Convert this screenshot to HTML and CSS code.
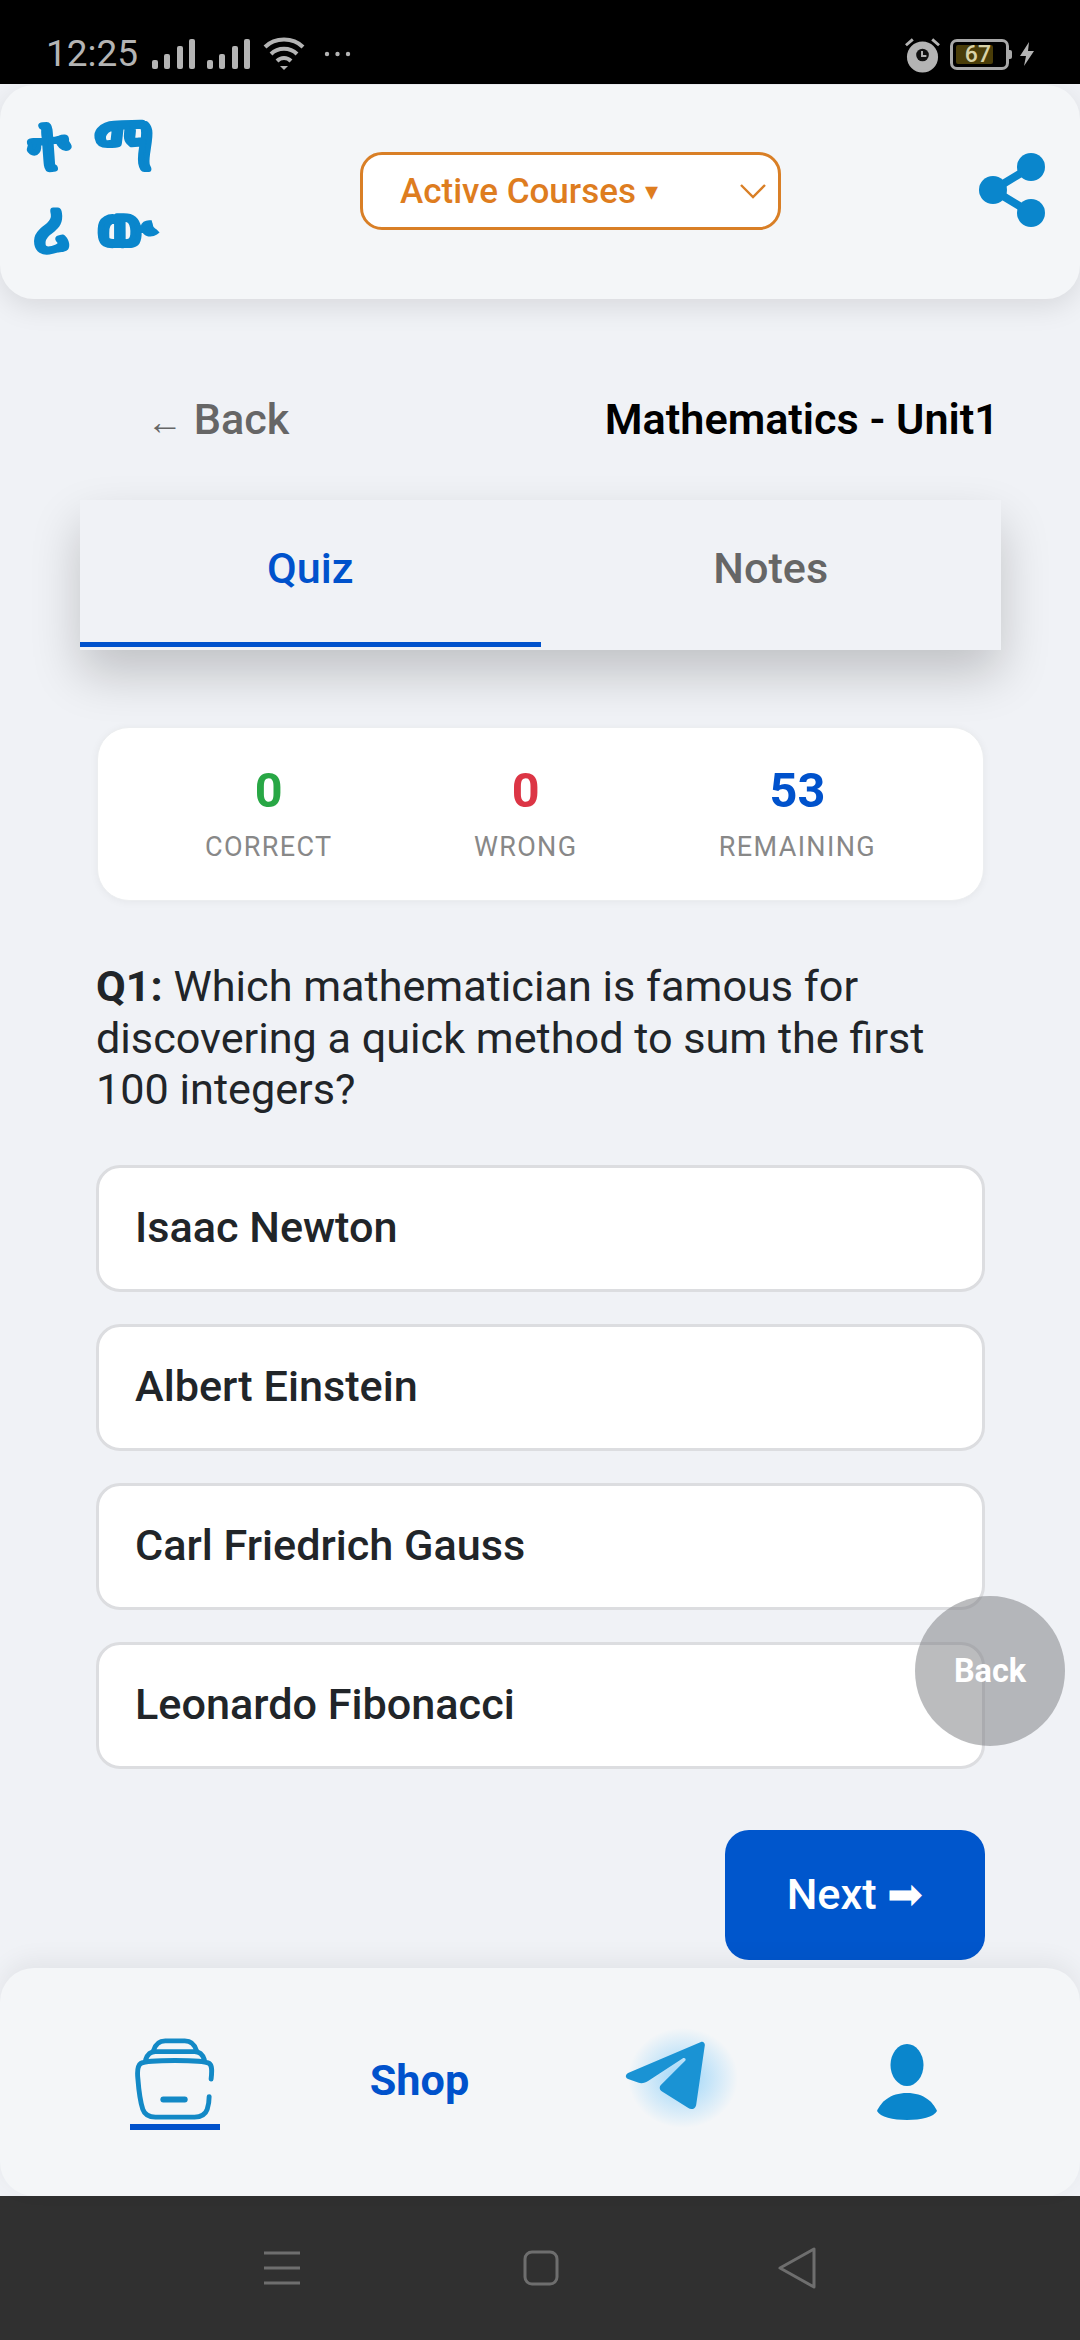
FILE: index.html
```html
<!DOCTYPE html>
<html lang="en">
<head>
<meta charset="utf-8">
<title>Quiz</title>
<link rel="stylesheet" href="styles.css">
</head>
<body>
<div class="page">
  <div class="status">
    <span class="time">12:25</span>
    <svg class="sig" width="43" height="30" viewBox="0 0 43 30"><rect x="0" y="21" width="6" height="9" rx="2"/><rect x="12" y="15" width="6" height="15" rx="2"/><rect x="25" y="7" width="6" height="23" rx="2"/><rect x="37" y="0" width="6" height="30" rx="2"/></svg>
    <svg class="sig" width="43" height="30" viewBox="0 0 43 30"><rect x="0" y="21" width="6" height="9" rx="2"/><rect x="12" y="15" width="6" height="15" rx="2"/><rect x="25" y="7" width="6" height="23" rx="2"/><rect x="37" y="0" width="6" height="30" rx="2"/></svg>
    <svg class="wifi" width="42" height="34" viewBox="0 0 42 34" fill="none" stroke="#b4b4b4" stroke-width="4"><path d="M2 10C12 0 30 0 40 10"/><path d="M8 17C15 10 27 10 34 17"/><path d="M14 24C18 20 24 20 28 24"/><path d="M17 29L21 33L25 29Z" fill="#b4b4b4" stroke="none"/></svg>
    <svg class="dots" width="27" height="6" viewBox="0 0 27 6"><circle cx="3" cy="3" r="2.2"/><circle cx="13.5" cy="3" r="2.2"/><circle cx="24" cy="3" r="2.2"/></svg>
    <span class="status-gap"></span>
    <svg class="alarm" width="35" height="37" viewBox="0 0 36 37"><circle cx="18" cy="21" r="16" fill="#b4b4b4"/><path d="M1 9L8 3M35 9L28 3" stroke="#b4b4b4" stroke-width="3" fill="none"/><circle cx="18" cy="19" r="6.5" fill="#111"/><path d="M17.5 15V20H22" stroke="#b4b4b4" stroke-width="2" fill="none"/></svg>
    <span class="battery"><span class="batt-num">67</span></span>
    <svg class="bolt" width="16" height="24" viewBox="0 0 16 24"><path d="M10 0L1 14H7L5 24L15 9H9Z" fill="#b4b4b4"/></svg>
  </div>

  <header class="top">
    <div class="logo" lang="am"><span>ተ</span><span>ማ</span><span>ሪ</span><span>ው</span></div>
    <div class="select">
      <span class="select-label">Active Courses <span class="caret">▾</span></span>
      <svg width="26" height="15" viewBox="0 0 26 15" fill="none" stroke="#d97f26" stroke-width="2.4"><path d="M1 1L13 13L25 1"/></svg>
    </div>
    <svg class="share" width="66" height="74" viewBox="0 0 66 74"><path d="M52 14L14 37L52 60" fill="none" stroke="#0a86cc" stroke-width="8"/><circle cx="52" cy="14" r="14" fill="#0a86cc"/><circle cx="14" cy="37" r="14" fill="#0a86cc"/><circle cx="52" cy="60" r="14" fill="#0a86cc"/></svg>
  </header>

  <main class="content">
    <div class="crumb">
      <span class="back"><span class="arrow">←</span> Back</span>
      <span class="title">Mathematics - Unit1</span>
    </div>
    <div class="tabs">
      <div class="tab active">Quiz</div>
      <div class="tab">Notes</div>
    </div>
    <div class="stats">
      <div class="stat"><div class="num green">0</div><div class="lbl">CORRECT</div></div>
      <div class="stat"><div class="num red">0</div><div class="lbl">WRONG</div></div>
      <div class="stat"><div class="num blue">53</div><div class="lbl">REMAINING</div></div>
    </div>
    <p class="question"><b>Q1:</b> Which mathematician is famous for discovering a quick method to sum the first 100 integers?</p>
    <div class="options">
      <div class="option">Isaac Newton</div>
      <div class="option">Albert Einstein</div>
      <div class="option">Carl Friedrich Gauss</div>
      <div class="option">Leonardo Fibonacci</div>
    </div>
    <div class="next-row"><div class="next">Next ➡</div></div>
  </main>

  <nav class="bottom">
    <div class="nav-item">
      <span class="nav-active">
        <svg width="80" height="82" viewBox="0 0 80 84" fill="none" stroke="#1389c6" stroke-width="5" stroke-linecap="round" stroke-linejoin="round"><path d="M77 42C78 33 78 28 75 26C72 24 64 23 40 23C16 23 8 24 5 26C2 28 1 33 2 42C3 55 5 67 7 73C9 79 13 81 20 81H60C67 81 71 79 73 73C74 70 75 67 75 60"/><path d="M10 22C12 16 15 14 20 14H60C65 14 68 16 70 22"/><path d="M18 13C20 6 24 3 30 3H50C56 3 60 6 62 13"/><path d="M28 63H50" stroke-width="6"/></svg>
      </span>
    </div>
    <div class="nav-item shop">Shop</div>
    <div class="nav-item">
      <span class="tg-glow"></span>
      <svg class="tg" width="84" height="70" viewBox="0 0 82 72"><path d="M78 1C80 0 82 2 82 4L73 66C72 70 68 71 65 69L38 52C35 50 35 47 37 45L62 20C63 18 61 17 59 18L24 41C21 43 17 44 14 43L3 39C0 38 0 35 3 33Z" fill="#1a93d4"/></svg>
    </div>
    <div class="nav-item">
      <svg class="user" width="60" height="76" viewBox="0 0 60 76"><ellipse cx="30" cy="21" rx="16.5" ry="21" fill="#0a86cc"/><path d="M30 49C47 49 56 58 60 67C57 73 44 76 30 76C16 76 3 73 0 67C4 58 13 49 30 49Z" fill="#0a86cc"/></svg>
    </div>
  </nav>

  <div class="sysnav">
    <svg width="36" height="34" viewBox="0 0 36 34" stroke="#6e6e6e" stroke-width="3"><path d="M0 2H36M0 17H36M0 32H36"/></svg>
    <svg width="36" height="36" viewBox="0 0 36 36" fill="none" stroke="#6e6e6e" stroke-width="3"><rect x="2" y="2" width="32" height="32" rx="7"/></svg>
    <svg class="tri" width="38" height="42" viewBox="0 0 38 42" fill="none" stroke="#6e6e6e" stroke-width="3" stroke-linejoin="round"><path d="M36 2V40L2 21Z"/></svg>
  </div>

  <div class="float-back">Back</div>
</div>
</body>
</html>
```
FILE: styles.css
```css
* { box-sizing: border-box; }
html, body { margin: 0; padding: 0; }
body { font-family: Roboto, "Liberation Sans", sans-serif; background: #f0f2f6; }
.page { position: relative; width: 1080px; height: 2340px; overflow: hidden; display: flex; flex-direction: column; background: #f0f2f6; }

.status { height: 84px; flex: none; background: #000; display: flex; align-items: center; padding: 24px 0 0 46px; color: #b4b4b4; }
.time { font-size: 37px; line-height: 40px; width: 106px; }
.sig { fill: #b4b4b4; margin-right: 12px; }
.sig + .wifi { margin-left: 1px; }
.wifi { margin-right: 19px; }
.dots { fill: #b4b4b4; }
.status-gap { flex: 1; }
.alarm { margin-right: 10px; }
.battery { width: 59px; height: 31px; border: 3px solid #a8a8a8; border-radius: 7px; padding: 3px 0 0 3px; margin-right: 10px; display: block; position: relative; }
.battery::after { content: ""; position: absolute; right: -6px; top: 8px; width: 3px; height: 9px; background: #a8a8a8; border-radius: 0 2px 2px 0; }
.batt-num { display: block; width: 37px; height: 19px; background: #4a3d08; color: #d8d2a8; font-size: 23px; line-height: 19px; font-weight: 500; text-align: right; border-radius: 2px; padding-right: 2px; }
.bolt { margin-right: 45px; }

.top { height: 214px; flex: none; margin-top: 1px; background: #f4f6f8; border-radius: 34px; box-shadow: 0 8px 28px rgba(0,0,0,.1); display: flex; align-items: flex-start; position: relative; z-index: 2; }
.logo { width: 360px; height: 100%; display: grid; grid-template-columns: 76px 78px; grid-auto-rows: 83px; padding: 14px 0 0 10px; color: #0a86cc; font-family: "Noto Sans", "DejaVu Sans", sans-serif; font-size: 62px; font-weight: 700; line-height: 83px; text-align: center; -webkit-text-stroke: 3px #0a86cc; }
.logo span { display: block; transform: skewX(10deg) scaleY(1.22); }
.select { width: 421px; height: 78px; margin-top: 67px; background: #fff; border: 3px solid #d97f26; border-radius: 22px; display: flex; align-items: center; justify-content: space-between; padding: 0 12px 0 37px; }
.select-label { font-size: 35px; font-weight: 500; color: #de7d1f; }
.caret { font-size: 26px; vertical-align: 3px; }
.share { margin: 68px 0 0 198px; }

.content { flex: 1; min-height: 0; display: flex; flex-direction: column; }
.crumb { display: flex; justify-content: space-between; padding: 96px 81px 0 147px; height: 201px; }
.back { font-size: 43.2px; line-height: 50px; font-weight: 500; color: #666; }
.arrow { font-size: 36px; font-weight: 700; }
.title { font-size: 43.2px; line-height: 50px; font-weight: 600; color: #000; }
.tabs { width: 921px; height: 150px; margin-left: 80px; background: #f0f2f6; display: flex; box-shadow: 0 24px 50px rgba(0,0,0,.2); }
.tab { flex: 1; text-align: center; font-size: 43.2px; line-height: 50px; padding-top: 44px; font-weight: 500; color: #666; }
.tab.active { color: #0052cc; border-bottom: 5px solid #0052cc; height: 147px; }

.stats { width: 887px; height: 174px; margin: 77px 0 0 97px; background: #fff; border-radius: 32px; border: 1px solid #eceef0; box-shadow: 0 1px 8px rgba(0,0,0,.05); display: flex; justify-content: space-between; padding: 36px 107px 0; }
.stat { text-align: center; }
.num { font-size: 48.6px; line-height: 54px; font-weight: 700; }
.green { color: #28a745; }
.red { color: #dc3545; }
.blue { color: #0052cc; }
.lbl { font-size: 27px; line-height: 30px; margin-top: 14px; letter-spacing: 1.35px; color: #888; }

.question { margin: 60px 96px 0 96px; font-size: 43.2px; line-height: 51.5px; color: #212529; }
.options { margin: 49px 95px 0 96px; display: flex; flex-direction: column; gap: 32.3px; }
.option { height: 127px; background: #fff; border: 3px solid #dcdde0; border-radius: 24px; font-size: 43.2px; line-height: 119px; font-weight: 500; color: #212529; padding-left: 36px; }
.next-row { display: flex; justify-content: flex-end; padding: 61px 95px 0 0; }
.next { width: 260px; height: 130px; background: #0056cc; border-radius: 24px; color: #fff; font-size: 43.2px; font-weight: 500; line-height: 130px; text-align: center; }

.bottom { height: 228px; flex: none; background: #f4f6f8; border-radius: 34px; box-shadow: 0 -8px 24px rgba(0,0,0,.06); display: grid; grid-template-columns: repeat(4, 245px); padding-left: 52px; align-items: center; position: relative; z-index: 2; }
.nav-item { position: relative; display: flex; justify-content: center; align-items: center; height: 100%; }
.nav-active { display: block; width: 90px; height: 92px; border-bottom: 6px solid #0052cc; text-align: center; margin-top: 4px; }
.nav-active svg { display: block; margin: 0 auto; }
.shop { font-size: 43.2px; font-weight: 700; color: #0052cc; padding-bottom: 4px; }
.tg { position: relative; margin-bottom: 12px; }
.tg-glow { position: absolute; left: 86px; top: 60px; width: 110px; height: 100px; border-radius: 50%; background: radial-gradient(closest-side, rgba(80,185,250,.55), rgba(80,185,250,0)); }
.user { margin-right: 6px; }

.sysnav { height: 144px; flex: none; background: #303030; display: flex; align-items: center; padding-left: 264px; gap: 223px; }
.tri { margin-left: -4px; }

.float-back { position: absolute; left: 915px; top: 1596px; width: 150px; height: 150px; border-radius: 50%; background: rgba(120,122,125,.5); color: #fff; font-size: 32.4px; font-weight: 700; line-height: 150px; text-align: center; z-index: 3; }
```
